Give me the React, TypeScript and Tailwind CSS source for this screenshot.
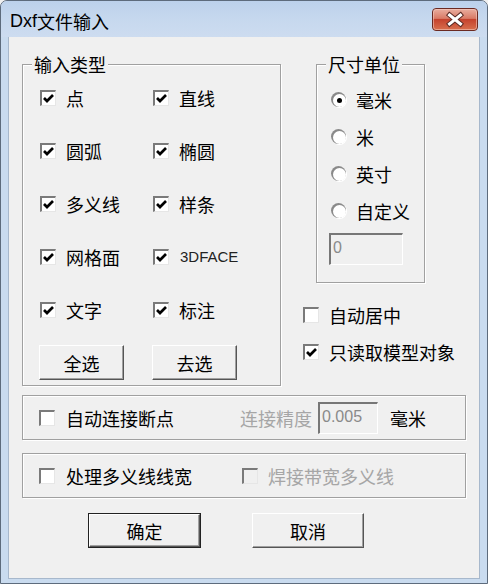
import React from "react";

const FONT = { fontFamily: '"Noto Sans CJK SC", "Liberation Sans", sans-serif' };

function Check({ checked = false, disabled = false }: { checked?: boolean; disabled?: boolean }) {
  return (
    <span
      className={`relative inline-flex w-[16px] h-[16px] shrink-0 border-t-2 border-l-2 border-b border-r border-t-[#7a7a7a] border-l-[#7a7a7a] border-b-[#e6e6e6] border-r-[#e6e6e6] ${
        disabled ? "bg-[#f0f0f0]" : "bg-white"
      }`}
    >
      {checked && (
        <svg width="13" height="13" viewBox="0 0 13 13" className="absolute left-[0px] top-[0px]">
          <path d="M2 6 L5 9 L11 3" fill="none" stroke="#000" strokeWidth="2.7" />
        </svg>
      )}
    </span>
  );
}

function Radio({ checked = false }: { checked?: boolean }) {
  return (
    <span className="relative inline-flex w-[15px] h-[15px] shrink-0 rounded-full bg-white shadow-[inset_1px_1px_0_1px_#8a8a8a,1px_1px_0_0_#ffffff] items-center justify-center">
      {checked && <span className="w-[5px] h-[5px] rounded-full bg-black ml-[1px] mt-[1px]" />}
    </span>
  );
}

function CheckRow({ label, checked, latin }: { label: string; checked?: boolean; latin?: boolean }) {
  return (
    <div className="flex items-center h-[53px]">
      <Check checked={checked} />
      {latin ? (
        <span
          className="ml-[11px] text-[15px] leading-none text-[#222]"
          style={{ fontFamily: '"Liberation Sans", Arial, sans-serif' }}
        >
          {label}
        </span>
      ) : (
        <span className="ml-[10px] text-[18px] leading-none">{label}</span>
      )}
    </div>
  );
}

function RadioRow({ label, checked }: { label: string; checked?: boolean }) {
  return (
    <div className="flex items-center h-[37px]">
      <Radio checked={checked} />
      <span className="ml-[10px] text-[18px] leading-none">{label}</span>
    </div>
  );
}

function Btn({ label, w, def = false }: { label: string; w: string; def?: boolean }) {
  const inner = (
    <div className="w-full h-full flex items-center justify-center bg-[#f0f0f0] border border-t-white border-l-white border-b-[#555] border-r-[#555] shadow-[inset_-1px_-1px_0_#a0a0a0] text-[18px] leading-none">
      {label}
    </div>
  );
  if (def) {
    return <div className={`${w} h-[35px] border border-[#222]`}>{inner}</div>;
  }
  return <div className={`${w} h-[35px]`}>{inner}</div>;
}

function Group({
  legend,
  className,
  children,
}: {
  legend?: string;
  className: string;
  children: React.ReactNode;
}) {
  return (
    <div
      className={`relative border border-[#a0a0a0] shadow-[inset_1px_1px_0_#ffffff,1px_1px_0_#ffffff] ${className}`}
    >
      {legend && (
        <span className="absolute -top-[11px] left-[9px] px-[2px] bg-[#f0f0f0] text-[18px] leading-[20px]">
          {legend}
        </span>
      )}
      {children}
    </div>
  );
}

export default function App() {
  return (
    <div className="w-[488px] h-[584px] bg-[#f0f0f0]" style={FONT}>
      <div className="w-[488px] h-[584px] flex flex-col border border-[#5d6b7c] rounded-t-[7px] bg-[#c9dbef] overflow-hidden text-black">
        {/* Title bar */}
        <div className="h-[36px] shrink-0 flex items-start bg-gradient-to-b from-[#bcd1eb] via-[#c6d8ee] to-[#cddcf0] relative">
          <div className="pl-[9px] pt-[9px] flex items-center text-[18px] leading-[22px] text-black">
            <span style={{ fontFamily: '"Liberation Sans", "Noto Sans CJK SC", sans-serif' }}>Dxf</span>
            <span>文件输入</span>
          </div>
          <div className="absolute right-[9px] top-[7px]">
            <svg width="46" height="23" viewBox="0 0 46 23">
              <defs>
                <linearGradient id="cb" x1="0" y1="0" x2="0" y2="1">
                  <stop offset="0" stopColor="#eab0a2" />
                  <stop offset="0.45" stopColor="#d97a66" />
                  <stop offset="0.5" stopColor="#c5432e" />
                  <stop offset="1" stopColor="#d9714f" />
                </linearGradient>
              </defs>
              <rect x="0.5" y="0.5" width="45" height="22" rx="3.5" fill="url(#cb)" stroke="#6b2a22" />
              <rect x="1.5" y="1.5" width="43" height="20" rx="2.5" fill="none" stroke="#f6d0c6" strokeOpacity="0.55" />
              <path d="M17.5 7 L28.5 16 M28.5 7 L17.5 16" stroke="#5b2b25" strokeWidth="5" strokeLinecap="square" />
              <path d="M17.5 7 L28.5 16 M28.5 7 L17.5 16" stroke="#ffffff" strokeWidth="3" strokeLinecap="square" />
            </svg>
          </div>
        </div>
        {/* Client */}
        <div className="flex-1 mx-[7px] mb-[4px] bg-[#f0f0f0] border-x border-b border-[#a7b8cc] px-[13px] pt-[27px] flex flex-col">
          <div className="flex">
            <Group legend="输入类型" className="w-[259px] h-[322px] pl-[17px] pt-[6px]">
              <div className="grid grid-cols-[113px_1fr]">
                <CheckRow label="点" checked />
                <CheckRow label="直线" checked />
                <CheckRow label="圆弧" checked />
                <CheckRow label="椭圆" checked />
                <CheckRow label="多义线" checked />
                <CheckRow label="样条" checked />
                <CheckRow label="网格面" checked />
                <CheckRow label="3DFACE" checked latin />
                <CheckRow label="文字" checked />
                <CheckRow label="标注" checked />
                <div className="mt-[9px] -ml-[1px]">
                  <Btn label="全选" w="w-[85px]" />
                </div>
                <div className="mt-[9px] -ml-[1px]">
                  <Btn label="去选" w="w-[85px]" />
                </div>
              </div>
            </Group>
            <div className="ml-[22px] flex flex-col">
              <Group legend="尺寸单位" className="ml-[13px] w-[109px] h-[219px] pl-[14px] pt-[16px]">
                <RadioRow label="毫米" checked />
                <RadioRow label="米" />
                <RadioRow label="英寸" />
                <RadioRow label="自定义" />
                <div
                  className="mt-[4px] -ml-[2px] w-[74px] h-[32px] border-t-2 border-l-2 border-b border-r border-t-[#777] border-l-[#777] border-b-white border-r-white bg-[#f0f0f0] pl-[2px] pt-[5px] text-[16px] leading-none text-[#8a8a8a]"
                  style={{ fontFamily: '"Liberation Sans", Arial, sans-serif' }}
                >
                  0
                </div>
              </Group>
              <div className="mt-[13px] flex items-center h-[37px]">
                <Check />
                <span className="ml-[10px] text-[18px] leading-none">自动居中</span>
              </div>
              <div className="flex items-center h-[37px]">
                <Check checked />
                <span className="ml-[10px] text-[18px] leading-none">只读取模型对象</span>
              </div>
            </div>
          </div>

          <Group className="mt-[9px] w-[444px] h-[45px] pl-[16px] flex items-center">
            <div className="w-[201px] flex items-center">
              <Check />
              <span className="ml-[11px] text-[18px] leading-none">自动连接断点</span>
            </div>
            <span className="text-[18px] leading-none text-[#a6a6a6]">连接精度</span>
            <div
              className="ml-[6px] w-[60px] h-[32px] border-t-2 border-l-2 border-b border-r border-t-[#777] border-l-[#777] border-b-white border-r-white bg-[#f0f0f0] pl-[2px] pt-[5px] text-[16px] leading-none text-[#8a8a8a]"
              style={{ fontFamily: '"Liberation Sans", Arial, sans-serif' }}
            >
              0.005
            </div>
            <span className="ml-[12px] text-[18px] leading-none">毫米</span>
          </Group>

          <Group className="mt-[13px] w-[444px] h-[45px] pl-[16px] flex items-center">
            <div className="w-[203px] flex items-center">
              <Check />
              <span className="ml-[11px] text-[18px] leading-none">处理多义线线宽</span>
            </div>
            <Check disabled />
            <span className="ml-[10px] text-[18px] leading-none text-[#a6a6a6]">焊接带宽多义线</span>
          </Group>

          <div className="mt-[15px] ml-[66px] flex gap-[51px]">
            <Btn label="确定" w="w-[113px]" def />
            <Btn label="取消" w="w-[112px]" />
          </div>
        </div>
      </div>
    </div>
  );
}
